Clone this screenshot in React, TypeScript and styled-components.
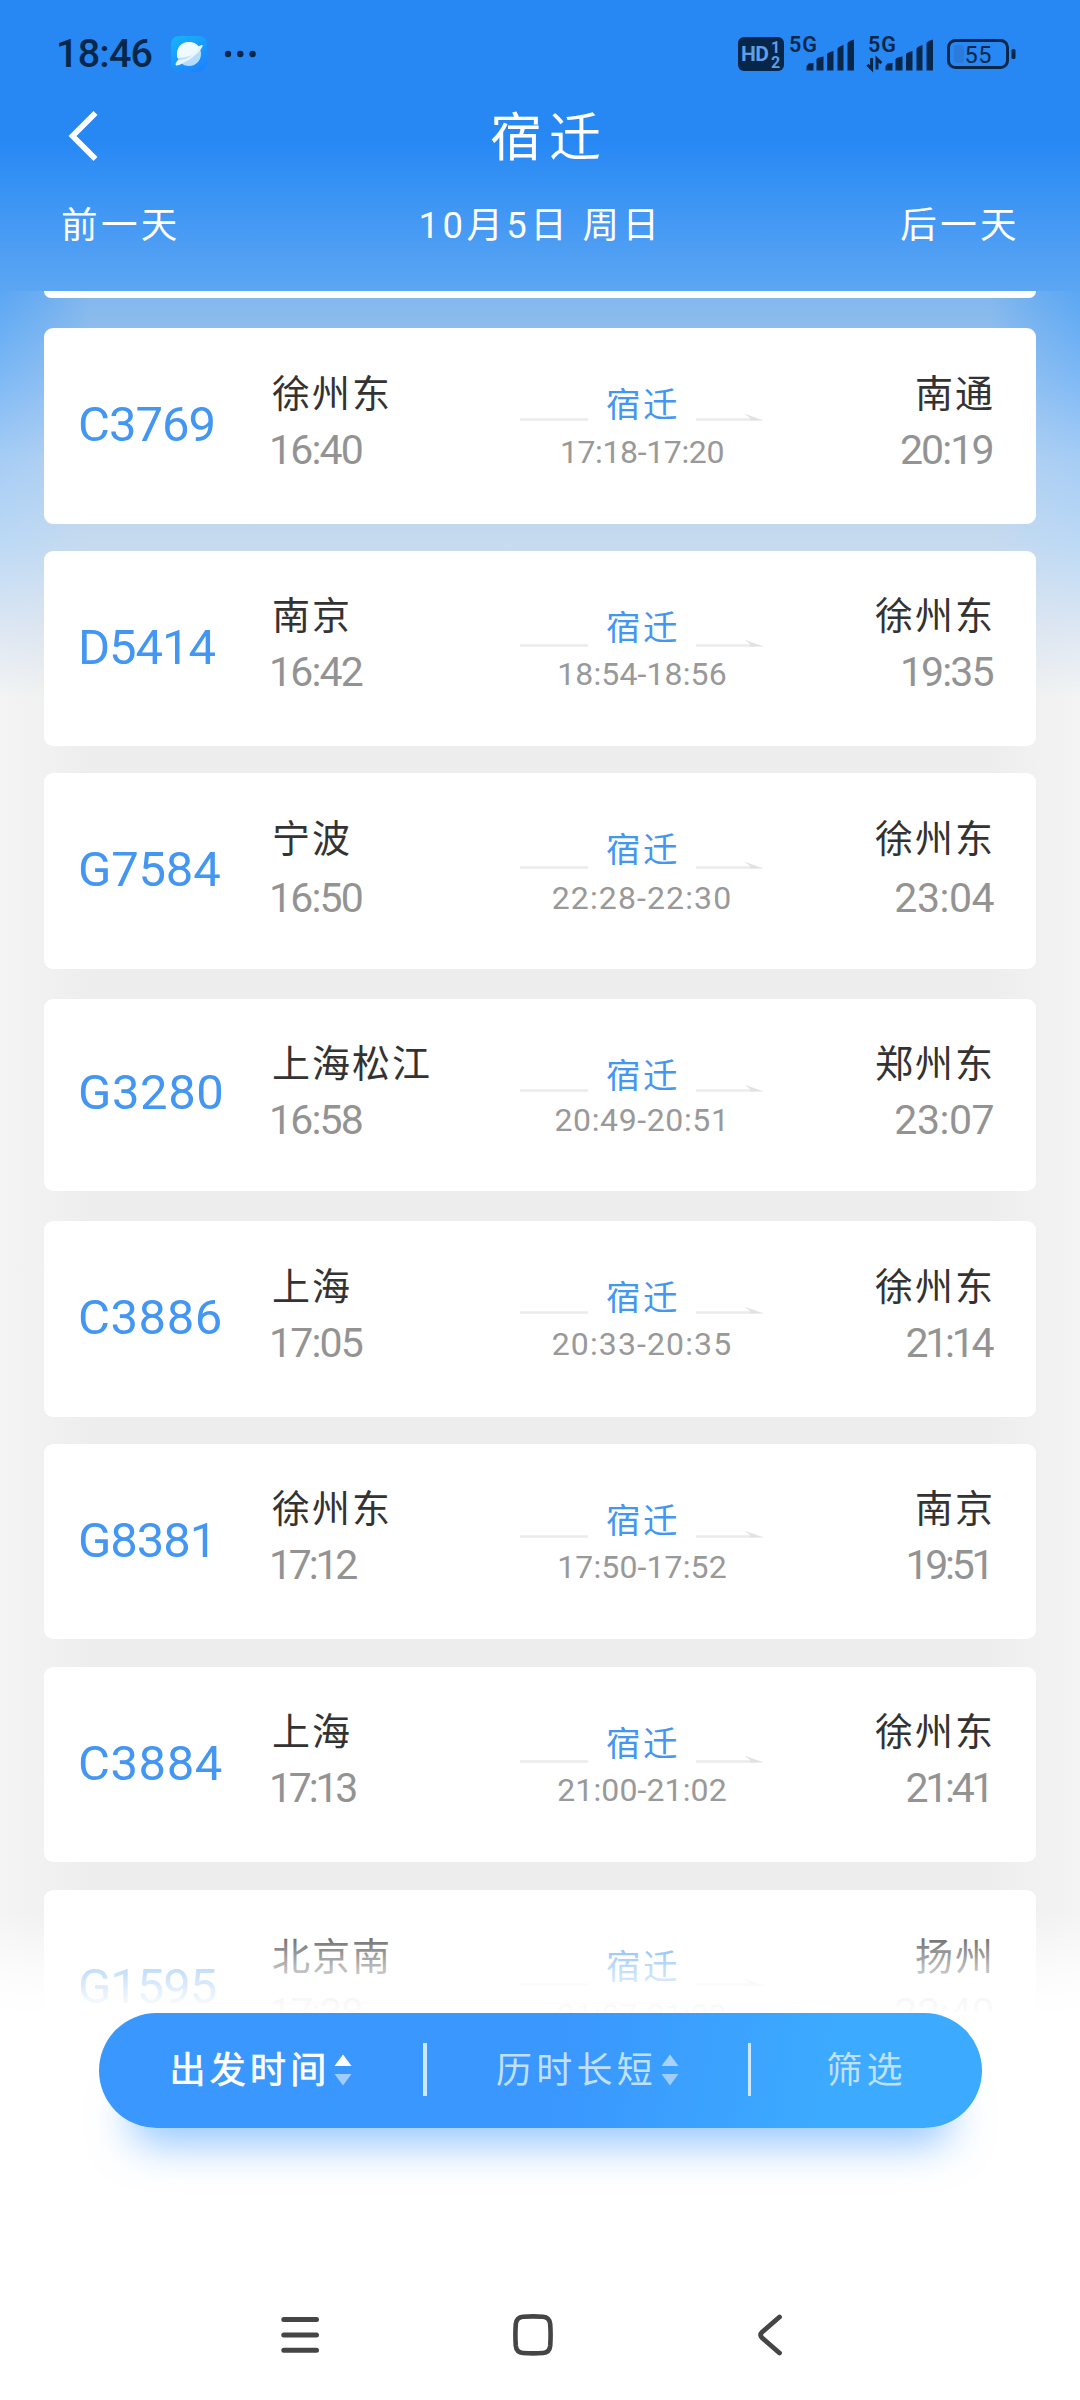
import React from 'react';
import styled, { createGlobalStyle } from 'styled-components';

const LATIN = "Roboto, 'Noto Sans CJK SC', sans-serif";
const CJK = "'Noto Sans CJK SC', Roboto, sans-serif";
const INK = '#06264a';

const GlobalStyle = createGlobalStyle`
  * { box-sizing: border-box; }
  body { margin: 0; background: #ffffff; }
`;

const Screen = styled.div`
  width: 1080px;
  height: 2400px;
  display: flex;
  flex-direction: column;
  overflow: hidden;
  font-family: ${CJK};
  white-space: nowrap;
  background:
    linear-gradient(
      to bottom,
      #2788f4 0px,
      #2788f4 140px,
      #3a94f4 195px,
      #4e9ef3 250px,
      #5ea8f3 300px,
      #7db8f5 375px,
      #a6cdf5 460px,
      #bdd9f5 545px,
      #dde7f3 630px,
      #f4f4f4 700px,
      #f4f4f4 2012px,
      #ffffff 2012px
    );
`;

const StatusBar = styled.header`
  height: 90px;
  padding: 0 64px 0 56px;
  display: flex;
  justify-content: space-between;
  align-items: flex-start;
`;

const StatusLeft = styled.div`
  display: flex;
  align-items: center;
  padding-top: 30px;
  height: 78px;
`;

const Clock = styled.span`
  width: 115px;
  font: 500 39.5px/48px ${LATIN};
  letter-spacing: -0.8px;
  color: ${INK};
`;

const StatusRight = styled.div`
  display: flex;
  padding-top: 24px;
`;

const TitleBar = styled.div`
  height: 94px;
  display: grid;
  grid-template-columns: 200px 1fr 200px;
`;

const BackButton = styled.button`
  display: flex;
  align-items: flex-start;
  border: 0;
  background: none;
  padding: 20px 0 0 66px;
`;

const Title = styled.h1`
  margin: 0;
  padding: 8px 0 0 18px;
  text-align: center;
  font: 400 52px/72px ${CJK};
  letter-spacing: 7px;
  color: #fff;
`;

const DateBar = styled.nav`
  height: 107px;
  padding: 12px 60px 0 61px;
  display: grid;
  grid-template-columns: 1fr 2fr 1fr;
`;

const DateItem = styled.span<{ $align?: string }>`
  text-align: ${(p) => p.$align ?? 'left'};
  font: 400 36.5px/60px ${LATIN};
  letter-spacing: 3.4px;
  color: #fff;
`;

const List = styled.main`
  position: relative;
  height: 1721px;
  padding: 0 44px;
  display: flex;
  flex-direction: column;
  overflow: hidden;
  background: linear-gradient(
    to right,
    rgba(222, 222, 222, 0) 0,
    rgba(222, 222, 222, 0.13) 44px,
    rgba(222, 222, 222, 0.3) 90px,
    rgba(222, 222, 222, 0.3) 990px,
    rgba(222, 222, 222, 0.13) 1036px,
    rgba(222, 222, 222, 0) 1080px
  );
`;

const PreviousCard = styled.div`
  flex: none;
  height: 7px;
  margin-bottom: 30px;
  border-radius: 0 0 9px 9px;
  background: #fff;
`;

const Card = styled.article<{ $h: number; $gap: number }>`
  flex: none;
  height: ${(p) => p.$h}px;
  margin-bottom: ${(p) => p.$gap}px;
  padding: 0 43px 0 33px;
  border-radius: 9px;
  background: #fff;
  display: grid;
  grid-template-columns: 193px 200px 340px 1fr;
`;

const Code = styled.div<{ $top: number; $ls: number }>`
  padding: ${(p) => p.$top}px 0 0 1px;
  font: 400 49px/56px ${LATIN};
  letter-spacing: ${(p) => p.$ls}em;
  color: #4396f2;
`;

const Stop = styled.div<{ $right?: boolean; $top: number }>`
  padding-top: ${(p) => p.$top}px;
  display: flex;
  flex-direction: column;
  align-items: ${(p) => (p.$right ? 'flex-end' : 'flex-start')};
`;

const Station = styled.div`
  height: 56px;
  font: 400 38px/56px ${CJK};
  letter-spacing: 2px;
  margin: 0 -2px 0 2px;
  color: #333;
`;

const StopTime = styled.div<{ $ls: number; $top: number }>`
  margin: ${(p) => p.$top}px calc(${(p) => -p.$ls}em - 1.5px) 0 -1px;
  font: 400 41px/56px ${LATIN};
  letter-spacing: ${(p) => p.$ls}em;
  color: #939393;
`;

const Via = styled.div`
  width: 244px;
  margin-left: 50px;
  padding-top: 51px;
  display: flex;
  flex-direction: column;
  align-items: center;
`;

const ViaRow = styled.div`
  display: grid;
  grid-template-columns: 68px 108px 68px;
  height: 50px;
`;

const ViaName = styled.span`
  text-align: center;
  font: 400 34.5px/46px ${CJK};
  letter-spacing: 2.6px;
  padding-left: 2px;
  color: #4396f2;
`;

const Rail = styled.svg<{ $top: number }>`
  display: block;
  margin-top: ${(p) => p.$top}px;
`;

const ViaTime = styled.div<{ $ls: number; $top: number }>`
  margin-top: ${(p) => p.$top}px;
  font: 400 32px/40px ${LATIN};
  letter-spacing: ${(p) => p.$ls}em;
  color: #999;
`;

const Fade = styled.div`
  position: absolute;
  left: 0;
  right: 0;
  bottom: 0;
  height: 100px;
  background: linear-gradient(
    to bottom,
    rgba(255, 255, 255, 0),
    rgba(255, 255, 255, 0.66) 55%,
    rgba(255, 255, 255, 0.93) 88%,
    rgba(255, 255, 255, 0.97)
  );
`;

const SortBar = styled.section`
  flex: none;
  width: 883px;
  height: 115px;
  margin: 1px 0 0 99px;
  border-radius: 58px;
  display: grid;
  grid-template-columns: 324px 4px 321px 3px 1fr;
  align-items: center;
  background: linear-gradient(100deg, #3a97fe 0%, #3a97fe 52%, #3caaff 82%, #3caaff 100%);
  box-shadow: 0 46px 42px -30px rgba(58, 151, 254, 0.55);
`;

const SortItem = styled.button<{ $active?: boolean }>`
  border: 0;
  background: none;
  padding: 0 0 8px;
  display: flex;
  align-items: center;
  justify-content: center;
  font: 400 36px/60px ${CJK};
  letter-spacing: 4.2px;
  color: ${(p) => (p.$active ? '#fff' : '#bfe0ff')};
  -webkit-text-stroke: ${(p) => (p.$active ? '0.7px #fff' : '0')};
`;

const Arrows = styled.svg`
  margin: 7px 0 0 4px;
`;

const Separator = styled.i`
  height: 53px;
  margin-bottom: 3px;
  background: #cfe6ff;
`;

const SystemNav = styled.footer`
  margin-top: auto;
  height: 86px;
  padding: 0 297px 0 281px;
  display: grid;
  grid-template-columns: 231px 1fr 26px;
`;

type Train = {
  code: string;
  from: string;
  dep: string;
  to: string;
  arr: string;
  stop: string;
  h?: number;
  gap?: number;
  codeTop?: number;
  nameTop?: number;
  timeTop?: number;
  rail?: number;
  stopTop?: number;
};

const trains: Train[] = [
  { code: 'C3769', from: '徐州东', dep: '16:40', to: '南通', arr: '20:19', stop: '17:18-17:20' },
  { code: 'D5414', from: '南京', dep: '16:42', to: '徐州东', arr: '19:35', stop: '18:54-18:56', gap: 27, rail: 3 },
  { code: 'G7584', from: '宁波', dep: '16:50', to: '徐州东', arr: '23:04', stop: '22:28-22:30', gap: 30, timeTop: 3, rail: 3, stopTop: 1 },
  { code: 'G3280', from: '上海松江', dep: '16:58', to: '郑州东', arr: '23:07', stop: '20:49-20:51', h: 192, gap: 30.5, codeTop: -3, stopTop: -2 },
  { code: 'C3886', from: '上海', dep: '17:05', to: '徐州东', arr: '21:14', stop: '20:33-20:35', gap: 27, stopTop: -1 },
  { code: 'G8381', from: '徐州东', dep: '17:12', to: '南京', arr: '19:51', stop: '17:50-17:52', gap: 27.5, rail: 1 },
  { code: 'C3884', from: '上海', dep: '17:13', to: '徐州东', arr: '21:41', stop: '21:00-21:02', gap: 27.5, rail: 3 },
  { code: 'G1595', from: '北京南', dep: '17:38', to: '扬州', arr: '22:40', stop: '21:07-21:09', nameTop: 2, rail: 3, stopTop: 2 },
];

const count = (text: string, part: string) => text.split(part).length - 1;

// Narrow digits (1, 7 and the pair 76) save width, spread over the whole string.
const tracking = (text: string, base: number, seven = 0) =>
  base -
  (0.17 * count(text, '1') + seven * (count(text, '7') + count(text, '76'))) / text.length;

const TrainCard = ({ t }: { t: Train }) => {
  const shift = t.nameTop ?? 0;
  const time = t.timeTop ?? 0;
  const rail = 35 + (t.rail ?? 0);
  return (
    <Card $h={t.h ?? 195.5} $gap={t.gap ?? 27}>
      <Code $top={69 + (t.codeTop ?? 0)} $ls={tracking(t.code, 0.012, 0.08)}>{t.code}</Code>
      <Stop $top={34.5 + shift}>
        <Station>{t.from}</Station>
        <StopTime $top={3 + time} $ls={tracking(t.dep, -0.01)}>{t.dep}</StopTime>
      </Stop>
      <Via>
        <ViaRow>
          <Rail $top={rail - 1} width="68" height="8" viewBox="0 0 68 8">
            <path d="M0 6.5H68" stroke="#ebebeb" strokeWidth="2.4" />
          </Rail>
          <ViaName>宿迁</ViaName>
          <Rail $top={rail - 1} width="68" height="8" viewBox="0 0 68 8">
            <path d="M0 6.5H60" stroke="#ebebeb" strokeWidth="2.4" />
            <path d="M48.5 0.8L68 7.6H54V5Z" fill="#e2e2e2" />
          </Rail>
        </ViaRow>
        <ViaTime $top={2.5 + (t.stopTop ?? 0)} $ls={tracking(t.stop, 0.035)}>{t.stop}</ViaTime>
      </Via>
      <Stop $right $top={34.5 + shift}>
        <Station>{t.to}</Station>
        <StopTime $top={3 + time} $ls={tracking(t.arr, -0.012)}>{t.arr}</StopTime>
      </Stop>
    </Card>
  );
};

const SortArrows = ({ up }: { up?: boolean }) => (
  <Arrows width="18" height="32" viewBox="0 0 18 32">
    <path d="M9 0.5L17.5 12H0.5Z" fill={up ? '#fff' : '#a8d2ff'} />
    <path d="M9 31.5L0.5 20H17.5Z" fill="#9fcdff" />
  </Arrows>
);

const BARS = ['M0 36V32L2 29L7 28.5V36Z', 'M10 36V25Q10 23 17 22V36Z', 'M20.5 36V20Q20.5 18 27 16.5V36Z', 'M31 36V14.5Q31 12.5 37 10.5V36Z', 'M41 36V9Q41 7 47.5 5V36Z'];

const Signal = () => (
  <g fill={INK}>
    {BARS.map((d) => (
      <path key={d} d={d} />
    ))}
  </g>
);

const StatusIcons = () => (
  <svg width="280" height="52" viewBox="736 24 280 52">
    <rect x="738" y="37" width="46" height="34" rx="6" fill={INK} />
    <g fill="#5e9fe6" fontFamily="Roboto, sans-serif" fontWeight="700">
      <text x="741" y="61" fontSize="21" textLength="28">HD</text>
      <text x="771" y="53" fontSize="16">1</text>
      <text x="771" y="68" fontSize="16">2</text>
    </g>
    <g fill={INK} fontFamily="Roboto, sans-serif" fontWeight="600">
      <text x="789" y="52" fontSize="21.5" textLength="28">5G</text>
      <text x="868" y="52" fontSize="21.5" textLength="28">5G</text>
      <text x="964.5" y="62.5" fontSize="23.5" fontWeight="400" textLength="27">55</text>
    </g>
    <g transform="translate(806.5 34.5)"><Signal /></g>
    <g transform="translate(885.5 34.5)"><Signal /></g>
    <path d="M871.6 58V69L867.4 64.800M877 69.500V59L881.400 63.200" fill="none" stroke={INK} strokeWidth="3" />
    <rect x="954" y="45" width="10" height="18" rx="3" fill="#2a7bdc" />
    <rect x="948.5" y="40.5" width="59" height="27" rx="7" fill="none" stroke={INK} strokeWidth="3" />
    <rect x="1011.5" y="49" width="4" height="10" rx="1.5" fill={INK} />
  </svg>
);

const App = () => (
  <>
    <GlobalStyle />
    <Screen>
      <StatusBar>
        <StatusLeft>
          <Clock>18:46</Clock>
          <svg width="90" height="36" viewBox="0 0 90 36">
            <defs>
              <linearGradient id="app" x1="0" y1="0" x2="0.6" y2="1">
                <stop offset="0" stopColor="#16b4fb" />
                <stop offset="1" stopColor="#1c86ff" />
              </linearGradient>
            </defs>
            <rect width="36" height="36" rx="8" fill="url(#app)" />
            <circle cx="18" cy="18" r="12" fill="#b5dcfd" />
            <path d="M6.6 22A12 12 0 1 1 29.4 14Q20 22 6.6 22Z" fill="#eefafd" />
            <path d="M7 24C2.5 29 4.5 31.5 11 27.5C19 24 27 18 30 13C33.5 7.5 31 8.5 27 10.5C27 17 15 24.5 7 24Z" fill="#e4f5ff" />
            <g fill={INK}>
              <circle cx="57" cy="18" r="3.2" />
              <circle cx="69.3" cy="18" r="3.2" />
              <circle cx="81.6" cy="18" r="3.2" />
            </g>
          </svg>
        </StatusLeft>
        <StatusRight>
          <StatusIcons />
        </StatusRight>
      </StatusBar>

      <TitleBar>
        <BackButton aria-label="返回">
          <svg width="34" height="52" viewBox="0 0 34 52">
            <path d="M29.5 3L6.5 26L29.5 49" fill="none" stroke="#fff" strokeWidth="5.6" />
          </svg>
        </BackButton>
        <Title>宿迁</Title>
      </TitleBar>

      <DateBar>
        <DateItem>前一天</DateItem>
        <DateItem $align="center">10月5日 周日</DateItem>
        <DateItem $align="right">后一天</DateItem>
      </DateBar>

      <List>
        <PreviousCard />
        {trains.map((t) => (
          <TrainCard key={t.code} t={t} />
        ))}
        <Fade />
      </List>

      <SortBar>
        <SortItem $active>出发时间<SortArrows up /></SortItem>
        <Separator />
        <SortItem>历时长短<SortArrows /></SortItem>
        <Separator />
        <SortItem>筛选</SortItem>
      </SortBar>

      <SystemNav>
        <svg width="38" height="42" viewBox="0 0 38 42">
          <path d="M2.8 5.5H35.5M2.8 21H35.5M2.8 36.2H35.5" stroke="#454545" strokeWidth="5" strokeLinecap="round" />
        </svg>
        <svg width="42" height="42" viewBox="0 0 42 42">
          <path d="M11 2.8Q21 2 31 2.8Q37.5 3.4 38.2 10Q39 21 38.2 32Q37.5 38.4 31 39Q21 39.8 11 39Q4.5 38.4 3.8 32Q3 21 3.8 10Q4.5 3.4 11 2.8Z" fill="none" stroke="#454545" strokeWidth="4.6" />
        </svg>
        <svg width="26" height="42" viewBox="0 0 26 42">
          <path d="M22 3L4.5 18.2Q1.8 21 4.5 23.8L22 39" fill="none" stroke="#454545" strokeWidth="4.8" strokeLinecap="round" transform="translate(0.5 0)" />
        </svg>
      </SystemNav>
    </Screen>
  </>
);

export default App;
